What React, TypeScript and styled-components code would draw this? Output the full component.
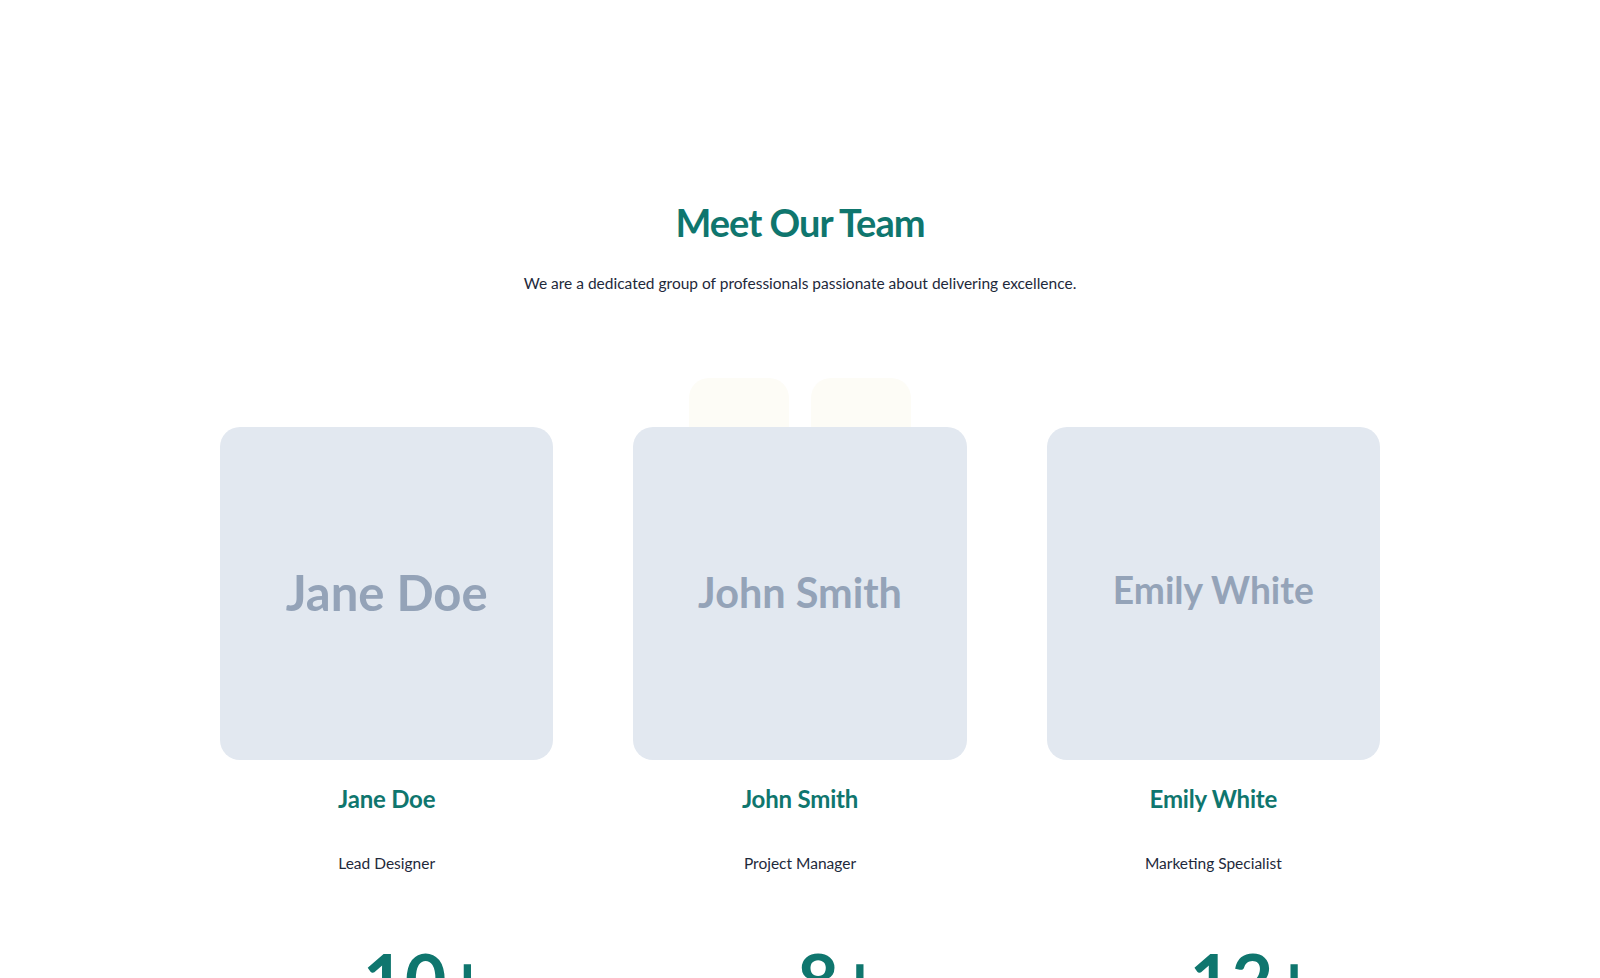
import React from "react";
import styled, { createGlobalStyle } from "styled-components";

const GlobalStyle = createGlobalStyle`
  body {
    margin: 0;
    background: #ffffff;
    font-family: Lato, "Noto Sans", sans-serif;
    color: #1e293b;
  }
`;

const Section = styled.section`
  padding: 200px 20px 0;
  display: flex;
  flex-direction: column;
  align-items: center;
  overflow: hidden;
  height: 978px;
  box-sizing: border-box;
`;

const Title = styled.h2`
  margin: 0;
  font-size: 38px;
  line-height: 1.2;
  font-weight: 700;
  color: #0f766e;
  letter-spacing: -1px;
`;

const Subtitle = styled.p`
  margin: 26px 0 0;
  font-size: 15.5px;
  line-height: 1.5;
  color: #1e293b;
`;

const Grid = styled.div`
  position: relative;
  width: 100%;
  max-width: 1160px;
  margin-top: 132px;
  display: grid;
  grid-template-columns: repeat(3, 1fr);
  column-gap: 80px;
`;

const Ghosts = styled.div`
  position: absolute;
  top: -49px;
  left: 50%;
  transform: translateX(-50%);
  display: flex;
  gap: 22px;
  z-index: 0;
`;

const Ghost = styled.div`
  width: 100px;
  height: 100px;
  border-radius: 20px;
  background: #fdfcf6;
`;

const Member = styled.div`
  position: relative;
  z-index: 1;
  display: flex;
  flex-direction: column;
  align-items: center;
`;

const Photo = styled.div<{ $size: number; $lift: number }>`
  width: 100%;
  aspect-ratio: 1;
  box-sizing: border-box;
  padding-bottom: ${(p) => p.$lift}px;
  border-radius: 20px;
  background: #e2e8f0;
  display: flex;
  align-items: center;
  justify-content: center;
  color: #94a3b8;
  font-weight: 700;
  font-size: ${(p) => p.$size}px;
`;

const Name = styled.h3`
  margin: 24px 0 0;
  font-size: 24px;
  line-height: 1.25;
  font-weight: 700;
  color: #0f766e;
  letter-spacing: -0.2px;
`;

const Role = styled.p`
  margin: 38px 0 0;
  font-size: 15.5px;
  line-height: 1.5;
  color: #1e293b;
`;

const Stats = styled.div`
  width: 100%;
  max-width: 1160px;
  margin-top: 68px;
  display: grid;
  grid-template-columns: repeat(3, 1fr);
  column-gap: 80px;
`;

const Stat = styled.div`
  padding-left: 78px;
  text-align: center;
  font-size: 72px;
  line-height: 1;
  font-weight: 700;
  color: #0f766e;
`;

const team = [
  { name: "Jane Doe", role: "Lead Designer", size: 49, lift: 4 },
  { name: "John Smith", role: "Project Manager", size: 41.4, lift: 4 },
  { name: "Emily White", role: "Marketing Specialist", size: 37.2, lift: 8 },
];

const stats = ["10+", "8+", "12+"];

export default function App() {
  return (
    <>
      <GlobalStyle />
      <Section>
        <Title>Meet Our Team</Title>
        <Subtitle>
          We are a dedicated group of professionals passionate about delivering excellence.
        </Subtitle>
        <Grid>
          <Ghosts>
            <Ghost />
            <Ghost />
          </Ghosts>
          {team.map((m) => (
            <Member key={m.name}>
              <Photo $size={m.size} $lift={m.lift}>
                {m.name}
              </Photo>
              <Name>{m.name}</Name>
              <Role>{m.role}</Role>
            </Member>
          ))}
        </Grid>
        <Stats>
          {stats.map((s) => (
            <Stat key={s}>{s}</Stat>
          ))}
        </Stats>
      </Section>
    </>
  );
}
